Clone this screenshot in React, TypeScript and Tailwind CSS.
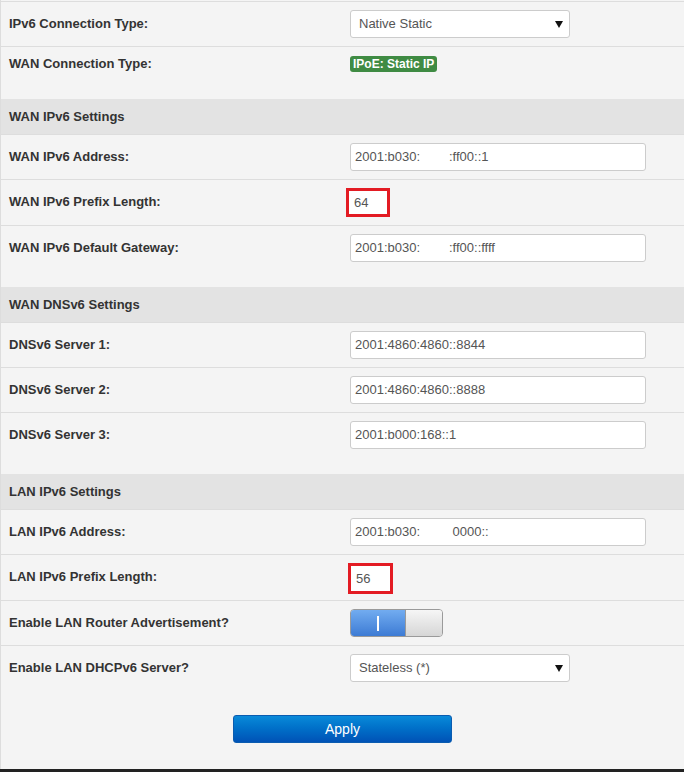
import React from 'react';

type Row = {
    label: string;
    kind: 'input' | 'select' | 'badge' | 'prefix' | 'toggle';
    value?: string;
    last?: boolean;
    boxClass?: string;
};

const sections: { title?: string; rows: Row[] }[] = [
    {
        rows: [
            { label: 'IPv6 Connection Type:', kind: 'select', value: 'Native Static' },
            { label: 'WAN Connection Type:', kind: 'badge', value: 'IPoE: Static IP', last: true },
        ],
    },
    {
        title: 'WAN IPv6 Settings',
        rows: [
            { label: 'WAN IPv6 Address:', kind: 'input', value: '2001:b030:        :ff00::1' },
            { label: 'WAN IPv6 Prefix Length:', kind: 'prefix', value: '64', boxClass: 'w-[44px] h-[29px] -ml-[4px]' },
            { label: 'WAN IPv6 Default Gateway:', kind: 'input', value: '2001:b030:        :ff00::ffff', last: true },
        ],
    },
    {
        title: 'WAN DNSv6 Settings',
        rows: [
            { label: 'DNSv6 Server 1:', kind: 'input', value: '2001:4860:4860::8844' },
            { label: 'DNSv6 Server 2:', kind: 'input', value: '2001:4860:4860::8888' },
            { label: 'DNSv6 Server 3:', kind: 'input', value: '2001:b000:168::1', last: true },
        ],
    },
    {
        title: 'LAN IPv6 Settings',
        rows: [
            { label: 'LAN IPv6 Address:', kind: 'input', value: '2001:b030:         0000::' },
            { label: 'LAN IPv6 Prefix Length:', kind: 'prefix', value: '56', boxClass: 'w-[45px] h-[31px] -ml-[2px] -mb-[2px]' },
            { label: 'Enable LAN Router Advertisement?', kind: 'toggle' },
        ],
    },
];

const Select = ({ value }: { value: string }) => (
    <div className="w-[220px] h-[28px] flex items-center justify-between pl-[8px] pr-[6px] bg-white border border-[#cccccc] rounded-[3px] text-[13px] text-[#555555]">
        <span>{value}</span>
        <svg width="8" height="7" viewBox="0 0 8 7">
            <path d="M0 0 L8 0 L4 7 Z" fill="#111111" />
        </svg>
    </div>
);

const Control = ({ row }: { row: Row }) => {
    switch (row.kind) {
        case 'select':
            return <Select value={row.value!} />;
        case 'badge':
            return (
                <div className="h-[18px] flex items-center">
                    <span className="h-[16px] px-[3px] flex items-center bg-[#3f8b43] rounded-[3px] text-white text-[12px] font-bold">
                        {row.value}
                    </span>
                </div>
            );
        case 'input':
            return (
                <div className="w-[296px] h-[28px] flex items-center pl-[4px] bg-white border border-[#cccccc] rounded-[3px] text-[13px] text-[#555555] whitespace-pre">
                    {row.value}
                </div>
            );
        case 'prefix':
            return (
                <div className={`${row.boxClass} flex items-center pl-[5px] bg-white border-[3px] border-[#e31b23] text-[13px] text-[#555555]`}>
                    {row.value}
                </div>
            );
        case 'toggle':
            return (
                <div className="w-[93px] h-[28px] flex border border-[#9a9a9a] rounded-[4px] overflow-hidden">
                    <div className="w-[54px] flex items-center justify-center bg-gradient-to-b from-[#72acf0] to-[#3d7bd4]">
                        <div className="w-[2px] h-[15px] bg-white" />
                    </div>
                    <div className="flex-1 border-l border-[#9a9a9a] bg-gradient-to-b from-[#f6f6f6] to-[#d6d6d6]" />
                </div>
            );
    }
};

const FormRow = ({ row }: { row: Row }) => {
    const pad = !row.last ? 'pb-2 border-b border-[#dddddd]' : row.kind === 'badge' ? 'pb-[26px]' : 'pb-[25px]';
    return (
        <div className={`flex items-start pt-2 ${pad}`}>
            <div className={`w-[349px] pl-[8px] flex items-center font-bold text-[13px] text-[#333333] ${row.kind === 'badge' ? 'h-[18px]' : 'h-[28px]'}`}>
                {row.label}
            </div>
            <Control row={row} />
        </div>
    );
};

export default function App() {
    return (
        <div className="w-[684px] h-[772px] flex flex-col bg-[#f4f4f4] font-['Liberation_Sans',Arial,sans-serif]">
            <div className="flex-1 flex flex-col pt-px border-l border-[#dddddd]">
                <div className="border-t border-[#dddddd]" />
                {sections.map((s, i) => (
                    <div key={i}>
                        {s.title && (
                            <div className="h-[36px] flex items-center pl-[8px] bg-[#e3e3e3] border-b border-[#dddddd] font-bold text-[13px] text-[#333333]">
                                {s.title}
                            </div>
                        )}
                        {s.rows.map((r) => (
                            <FormRow key={r.label} row={r} />
                        ))}
                    </div>
                ))}
                <div className="flex items-start pt-2">
                    <div className="w-[349px] h-[28px] pl-[8px] flex items-center font-bold text-[13px] text-[#333333]">
                        Enable LAN DHCPv6 Server?
                    </div>
                    <Select value="Stateless (*)" />
                </div>
                <div className="flex justify-center mt-[33px]">
                    <button className="w-[219px] h-[28px] rounded-[3px] border border-[#0a5cb0] bg-gradient-to-b from-[#0b8ad9] to-[#0052b6] text-white text-[14px]">
                        Apply
                    </button>
                </div>
            </div>
            <div className="h-[3px] bg-[#222222]" />
        </div>
    );
}
